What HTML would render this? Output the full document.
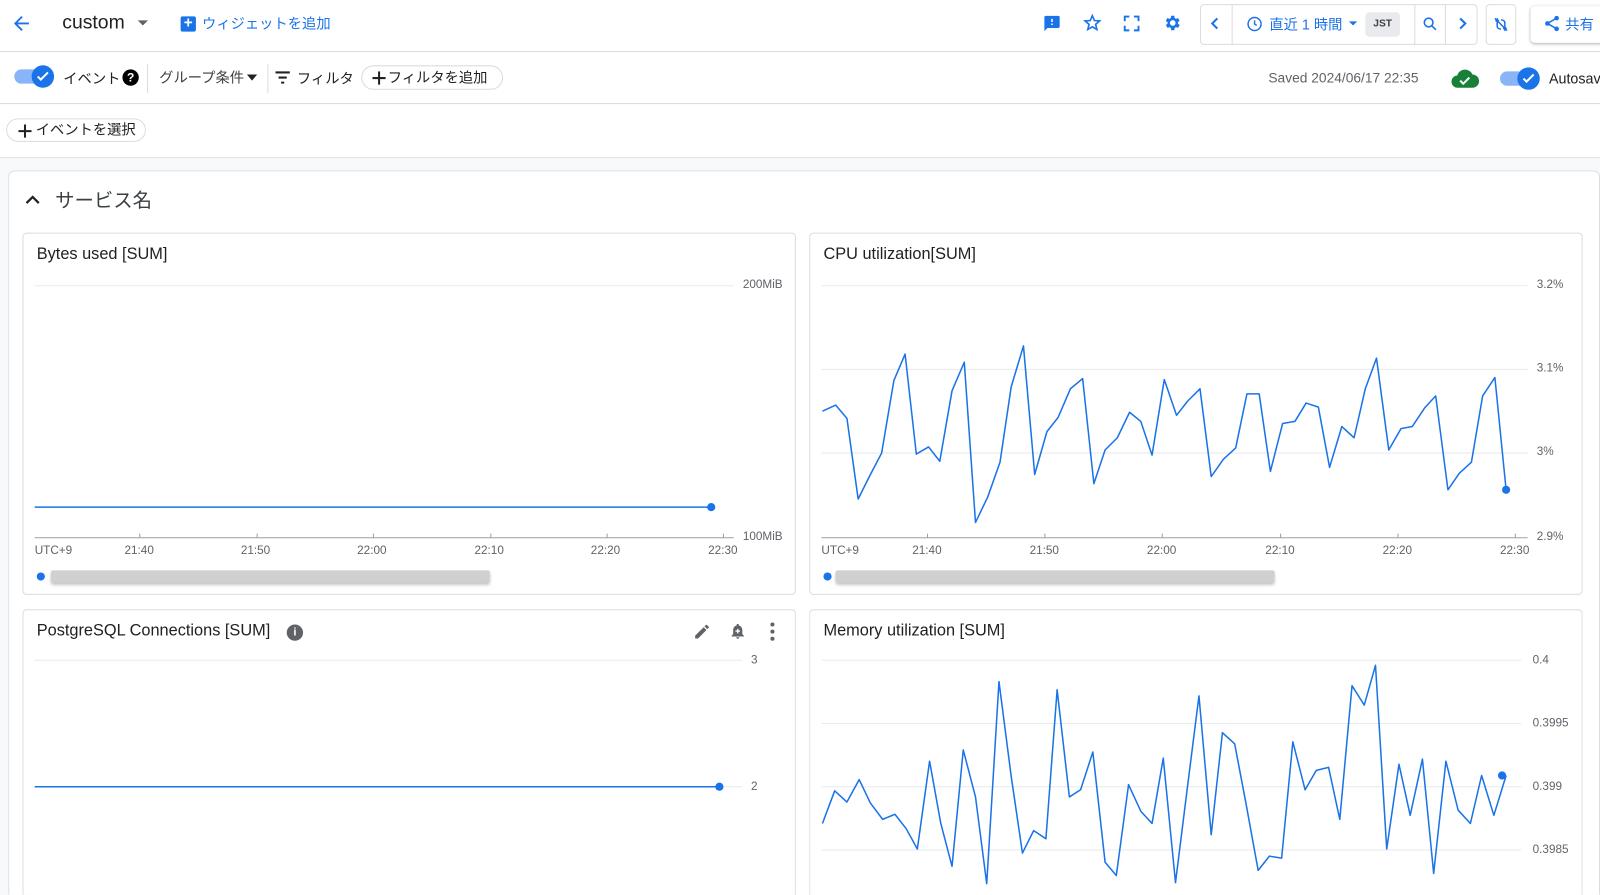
<!DOCTYPE html>
<html><head><meta charset="utf-8"><style>
*{box-sizing:border-box;margin:0;padding:0}
html,body{width:1600px;height:895px;overflow:hidden;background:#fff}
body{font-family:"Liberation Sans","Noto Sans CJK JP",sans-serif;color:#202124}
#w{position:absolute;left:0;top:0;width:1568px;height:877px;transform:scale(1.0204);transform-origin:0 0;overflow:hidden}
.a{position:absolute}
.blue{color:#1a73e8}
.hl{position:absolute;left:0;right:0;height:1px;background:#dadce0}
.chip{position:absolute;border:1px solid #dadce0;border-radius:14px;height:24px;font-size:14px;line-height:22px;padding:0 0 0 25px;white-space:nowrap}
.plus{position:absolute;left:10px;top:5px}
.card{position:absolute;background:#fff;border:1px solid #dadce0;border-radius:4px}
.t{font-size:16px;position:absolute;left:13px;top:12px}
.ax{font-size:11.5px;color:#5f6368;position:absolute}
.blur{position:absolute;height:12px;background:#d0d0d0;border-radius:2px;box-shadow:0 2px 3px rgba(0,0,0,.25)}
</style></head><body><div id="w">
<svg class="a" style="left:10px;top:12px" width="22" height="22" viewBox="0 0 24 24"><path d="M20 11H7.8l5.6-5.6L12 4l-8 8 8 8 1.4-1.4L7.8 13H20z" fill="#1a73e8"/></svg>
<div class="a" style="left:61px;top:12px;font-size:19px">custom</div>
<div class="a" style="left:135px;top:20px;border:5px solid transparent;border-top-color:#5f6368"></div>
<div class="a" style="left:177px;top:16px;width:15px;height:15px;background:#1a73e8;border-radius:2px;color:#fff;font-size:15px;line-height:14px;text-align:center;font-weight:bold">+</div>
<div class="a blue" style="left:198px;top:13px;font-size:14px">ウィジェットを追加</div>
<svg class="a" style="left:1022px;top:14px" width="18" height="18" viewBox="0 0 24 24"><path d="M20 2H4a2 2 0 0 0-2 2v18l4-4h14a2 2 0 0 0 2-2V4a2 2 0 0 0-2-2zm-7 12h-2v-2h2zm0-4h-2V6h2z" fill="#1a73e8"/></svg>
<svg class="a" style="left:1061px;top:13px" width="19" height="19" viewBox="0 0 24 24"><path d="M12 3l2.6 6 6.4.5-4.9 4.2 1.5 6.3L12 16.7 6.4 20l1.5-6.3L3 9.5 9.4 9z" fill="none" stroke="#1a73e8" stroke-width="2"/></svg>
<svg class="a" style="left:1100px;top:14px" width="18" height="18" viewBox="0 0 24 24"><path d="M3 9V3h6M15 3h6v6M21 15v6h-6M9 21H3v-6" fill="none" stroke="#1a73e8" stroke-width="2.5"/></svg>
<svg class="a" style="left:1139px;top:13px" width="19" height="19" viewBox="0 0 24 24"><path d="M19.4 13a7.5 7.5 0 0 0 0-2l2.1-1.6-2-3.5-2.5 1a7 7 0 0 0-1.7-1L15 3h-4l-.4 2.9a7 7 0 0 0-1.7 1l-2.5-1-2 3.5L6.6 11a7.5 7.5 0 0 0 0 2l-2.1 1.6 2 3.5 2.5-1a7 7 0 0 0 1.7 1L11 21h4l.4-2.9a7 7 0 0 0 1.7-1l2.5 1 2-3.5zM13 15.5a3.5 3.5 0 1 1 0-7 3.5 3.5 0 0 1 0 7z" fill="#1a73e8"/></svg>
<div class="a" style="left:1176px;top:4px;width:272px;height:40px;border:1px solid #dadce0;border-radius:4px"></div>
<div class="a" style="left:1207px;top:4px;width:1px;height:40px;background:#dadce0"></div>
<div class="a" style="left:1386px;top:4px;width:1px;height:40px;background:#dadce0"></div>
<div class="a" style="left:1416px;top:4px;width:1px;height:40px;background:#dadce0"></div>
<svg class="a" style="left:1184px;top:15px" width="14" height="16" viewBox="0 0 14 16"><path d="M9 3L4 8l5 5" fill="none" stroke="#1a73e8" stroke-width="2"/></svg>
<svg class="a" style="left:1221px;top:15px" width="17" height="17" viewBox="0 0 24 24"><circle cx="12" cy="12" r="9" fill="none" stroke="#1a73e8" stroke-width="2"/><path d="M12 7v5l3 2" fill="none" stroke="#1a73e8" stroke-width="2"/></svg>
<div class="a blue" style="left:1244px;top:14px;font-size:14px">直近 1 時間</div>
<div class="a" style="left:1322px;top:21px;border:4.5px solid transparent;border-top-color:#1a73e8"></div>
<div class="a" style="left:1338px;top:12px;width:34px;height:24px;background:#e8eaed;border-radius:4px;font-size:10px;font-weight:bold;line-height:24px;text-align:center;color:#3c4043">JST</div>
<svg class="a" style="left:1393px;top:15px" width="17" height="17" viewBox="0 0 24 24"><circle cx="10" cy="10" r="6" fill="none" stroke="#1a73e8" stroke-width="2.2"/><path d="M14.5 14.5L20 20" stroke="#1a73e8" stroke-width="2.2"/></svg>
<svg class="a" style="left:1426px;top:15px" width="14" height="16" viewBox="0 0 14 16"><path d="M5 3l5 5-5 5" fill="none" stroke="#1a73e8" stroke-width="2"/></svg>
<div class="a" style="left:1456px;top:4px;width:30px;height:40px;border:1px solid #dadce0;border-radius:4px"></div>
<svg class="a" style="left:1462px;top:15px" width="18" height="18" viewBox="0 0 24 24"><path d="M4 4l16 16M7 4v10M17 20V10M9 8l-2-3-2 3M15 16l2 3 2-3M7 14c0 3 3 4 5 4M17 10c0-3-3-4-5-4" fill="none" stroke="#1a73e8" stroke-width="2"/></svg>
<div class="a" style="left:1500px;top:6px;width:80px;height:36px;background:#fff;border-radius:4px;box-shadow:0 1px 3px rgba(0,0,0,.3)"></div>
<svg class="a" style="left:1512px;top:14px" width="18" height="18" viewBox="0 0 24 24"><circle cx="18" cy="5" r="3" fill="#1a73e8"/><circle cx="6" cy="12" r="3" fill="#1a73e8"/><circle cx="18" cy="19" r="3" fill="#1a73e8"/><path d="M6 12l12-7M6 12l12 7" stroke="#1a73e8" stroke-width="2"/></svg>
<div class="a blue" style="left:1534px;top:14px;font-size:14px">共有</div>
<div class="hl" style="top:50px"></div>
<div class="a" style="left:14px;top:68px;width:36px;height:14px;background:#8ab4f8;border-radius:7px"></div>
<div class="a" style="left:31px;top:64px;width:22px;height:22px;background:#1a73e8;border-radius:50%"></div>
<svg class="a" style="left:35px;top:68px" width="14" height="14" viewBox="0 0 14 14"><path d="M2 7l3 3 7-7" fill="none" stroke="#fff" stroke-width="2"/></svg>
<div class="a" style="left:62px;top:67px;font-size:14px">イベント</div>
<div class="a" style="left:120px;top:68px;width:16px;height:16px;background:#000;border-radius:50%;color:#fff;font-size:12px;font-weight:bold;text-align:center;line-height:16px">?</div>
<div class="a" style="left:144px;top:63px;width:1px;height:28px;background:#dadce0"></div>
<div class="a" style="left:156px;top:66px;font-size:14px;color:#3c4043">グループ条件</div>
<div class="a" style="left:242px;top:73px;border:5px solid transparent;border-top:6px solid #202124"></div>
<div class="a" style="left:262px;top:63px;width:1px;height:28px;background:#dadce0"></div>
<svg class="a" style="left:268px;top:68px" width="18" height="16" viewBox="0 0 18 16"><path d="M2 3h14M5 8h8M7.5 13h3" stroke="#202124" stroke-width="2"/></svg>
<div class="a" style="left:291px;top:67px;font-size:14px">フィルタ</div>
<div class="chip" style="left:354px;top:64px;width:139px"><svg class="plus" width="13" height="13" viewBox="0 0 13 13"><path d="M6.5 0v13M0 6.5h13" stroke="#202124" stroke-width="2"/></svg>フィルタを追加</div>
<div class="a" style="left:1243px;top:69px;font-size:13.5px;color:#5f6368">Saved 2024/06/17 22:35</div>
<svg class="a" style="left:1422px;top:67px" width="28" height="20" viewBox="0 0 28 20"><path d="M7 19a6 6 0 0 1-1-12A8 8 0 0 1 21 6a6 6 0 0 1 0 13z" fill="#188038"/><path d="M9 12l3 3 6-6" fill="none" stroke="#fff" stroke-width="2"/></svg>
<div class="a" style="left:1470px;top:70px;width:36px;height:14px;background:#8ab4f8;border-radius:7px"></div>
<div class="a" style="left:1487px;top:66px;width:22px;height:22px;background:#1a73e8;border-radius:50%"></div>
<svg class="a" style="left:1491px;top:70px" width="14" height="14" viewBox="0 0 14 14"><path d="M2 7l3 3 7-7" fill="none" stroke="#fff" stroke-width="2"/></svg>
<div class="a" style="left:1518px;top:69px;font-size:14px">Autosave</div>
<div class="hl" style="top:101px"></div>
<div class="chip" style="left:6px;top:116px;width:137px;height:23px;line-height:21px;padding-left:28px"><svg class="plus" style="left:11px" width="13" height="13" viewBox="0 0 13 13"><path d="M6.5 0v13M0 6.5h13" stroke="#202124" stroke-width="2"/></svg>イベントを選択</div>
<div class="hl" style="top:154px"></div>
<div class="a" style="left:0;top:155px;width:1568px;height:722px;background:#f8f9fa"></div>
<div class="card" style="left:8px;top:167px;width:1560px;height:710px;border-radius:6px 6px 0 0;border-bottom:none"></div>
<svg class="a" style="left:23px;top:187px" width="18" height="18" viewBox="0 0 18 18"><path d="M3 12l6-6 6 6" fill="none" stroke="#202124" stroke-width="2.2"/></svg>
<div class="a" style="left:54px;top:182px;font-size:19px;color:#3c4043">サービス名</div>

<div class="card" style="left:22px;top:228px;width:758px;height:355px">
<div class="t">Bytes used [SUM]</div>
<svg class="a" style="left:0;top:0" width="758" height="355">
<line x1="11" y1="51" x2="696" y2="51" stroke="#e8eaed"/>
<line x1="11" y1="298" x2="696" y2="298" stroke="#9aa0a6"/>
<g stroke="#9aa0a6"><line x1="114" y1="294" x2="114" y2="298"/><line x1="229" y1="294" x2="229" y2="298"/><line x1="343" y1="294" x2="343" y2="298"/><line x1="458" y1="294" x2="458" y2="298"/><line x1="572" y1="294" x2="572" y2="298"/><line x1="686" y1="294" x2="686" y2="298"/></g>
<line x1="11" y1="268" x2="674" y2="268" stroke="#1a73e8" stroke-width="1.5"/><circle cx="674" cy="268" r="4" fill="#1a73e8"/>
<circle cx="17" cy="336" r="4" fill="#1a73e8"/>
</svg>
<div class="ax" style="left:705px;top:44px">200MiB</div><div class="ax" style="left:705px;top:291px">100MiB</div>
<div class="ax" style="left:11px;top:305px">UTC+9</div><div class="ax" style="left:99px;top:305px">21:40</div><div class="ax" style="left:213px;top:305px">21:50</div><div class="ax" style="left:327px;top:305px">22:00</div><div class="ax" style="left:442px;top:305px">22:10</div><div class="ax" style="left:556px;top:305px">22:20</div><div class="ax" style="left:671px;top:305px">22:30</div>
<div class="blur" style="left:27px;top:330px;width:430px"></div>
</div>

<div class="card" style="left:793px;top:228px;width:758px;height:355px">
<div class="t">CPU utilization[SUM]</div>
<svg class="a" style="left:0;top:0" width="758" height="355">
<line x1="11" y1="51" x2="703" y2="51" stroke="#e8eaed"/><line x1="11" y1="133" x2="703" y2="133" stroke="#e8eaed"/><line x1="11" y1="215" x2="703" y2="215" stroke="#e8eaed"/>
<line x1="11" y1="298" x2="703" y2="298" stroke="#9aa0a6"/>
<g stroke="#9aa0a6"><line x1="115" y1="294" x2="115" y2="298"/><line x1="230" y1="294" x2="230" y2="298"/><line x1="345" y1="294" x2="345" y2="298"/><line x1="461" y1="294" x2="461" y2="298"/><line x1="576" y1="294" x2="576" y2="298"/><line x1="691" y1="294" x2="691" y2="298"/></g>
<polyline transform="translate(-793,-228)" fill="none" stroke="#1a73e8" stroke-width="1.5" stroke-linejoin="round" points="805,402 818,396 829,409 840,488 851,466 863,443 875,372 886,346 897,444 909,437 920,451 932,382 944,354 955,511 967,486 979,452 990,378 1002,338 1013,464 1025,422 1036,408 1048,380 1060,370 1071,473 1082,440 1094,428 1106,403 1117,412 1128,445 1140,371 1152,406 1163,392 1175,380 1186,466 1198,449 1210,438 1221,385 1233,385 1244,461 1256,414 1268,412 1279,394 1291,398 1302,457 1314,417 1326,428 1337,380 1348,350 1360,440 1372,419 1383,417 1395,399 1406,387 1418,479 1429,463 1441,452 1452,387 1464,369 1475,479"/>
<circle cx="682" cy="251" r="4" fill="#1a73e8"/>
<circle cx="17" cy="336" r="4" fill="#1a73e8"/>
</svg>
<div class="ax" style="left:712px;top:44px">3.2%</div><div class="ax" style="left:712px;top:126px">3.1%</div><div class="ax" style="left:712px;top:208px">3%</div><div class="ax" style="left:712px;top:291px">2.9%</div>
<div class="ax" style="left:11px;top:305px">UTC+9</div><div class="ax" style="left:100px;top:305px">21:40</div><div class="ax" style="left:215px;top:305px">21:50</div><div class="ax" style="left:330px;top:305px">22:00</div><div class="ax" style="left:446px;top:305px">22:10</div><div class="ax" style="left:561px;top:305px">22:20</div><div class="ax" style="left:676px;top:305px">22:30</div>
<div class="blur" style="left:25px;top:330px;width:430px"></div>
</div>

<div class="card" style="left:22px;top:597px;width:758px;height:280px;border-bottom:none;border-radius:4px 4px 0 0">
<div class="t" style="top:12px">PostgreSQL Connections [SUM]</div>
<div class="a" style="left:258px;top:14px;width:16px;height:16px;background:#5f6368;border-radius:50%;color:#fff;font-size:11px;font-weight:bold;text-align:center;line-height:16px">i</div>
<svg class="a" style="left:656px;top:12px" width="18" height="18" viewBox="0 0 24 24"><path d="M3 17.2V21h3.8L17.8 9.9l-3.7-3.7zM20.7 7a1 1 0 0 0 0-1.4l-2.3-2.3a1 1 0 0 0-1.4 0l-1.8 1.8 3.7 3.7z" fill="#5f6368"/></svg>
<svg class="a" style="left:691px;top:11px" width="18" height="19" viewBox="0 0 24 24"><path d="M12 22a2 2 0 0 0 2-2h-4a2 2 0 0 0 2 2zm6-6v-5c0-3-1.6-5.6-4.5-6.3V4a1.5 1.5 0 0 0-3 0v.7C7.6 5.4 6 8 6 11v5l-2 2v1h16v-1z" fill="#5f6368"/><path d="M12 9v6M9 12h6" stroke="#fff" stroke-width="1.8"/></svg>
<svg class="a" style="left:726px;top:11px" width="16" height="20" viewBox="0 0 16 20"><circle cx="8" cy="3" r="2" fill="#5f6368"/><circle cx="8" cy="10" r="2" fill="#5f6368"/><circle cx="8" cy="17" r="2" fill="#5f6368"/></svg>
<svg class="a" style="left:0;top:0" width="758" height="280">
<line x1="11" y1="49" x2="704" y2="49" stroke="#e8eaed"/><line x1="11" y1="173" x2="704" y2="173" stroke="#e8eaed"/>
<line x1="11" y1="173" x2="682" y2="173" stroke="#1a73e8" stroke-width="1.5"/><circle cx="682" cy="173" r="4" fill="#1a73e8"/>
</svg>
<div class="ax" style="left:713px;top:43px">3</div><div class="ax" style="left:713px;top:167px">2</div>
</div>

<div class="card" style="left:793px;top:597px;width:758px;height:280px;border-bottom:none;border-radius:4px 4px 0 0">
<div class="t">Memory utilization [SUM]</div>
<svg class="a" style="left:0;top:0" width="758" height="280">
<line x1="11" y1="49" x2="697" y2="49" stroke="#e8eaed"/><line x1="11" y1="111" x2="697" y2="111" stroke="#e8eaed"/><line x1="11" y1="173" x2="697" y2="173" stroke="#e8eaed"/><line x1="11" y1="235" x2="697" y2="235" stroke="#e8eaed"/>
<polyline transform="translate(-793,-597)" fill="none" stroke="#1a73e8" stroke-width="1.5" stroke-linejoin="round" points="805,806 817,774 829,785 841,763 852,786 864,802 876,797 887,811 898,831 910,745 921,806 932,848 943,734 955,780 966,865 978,667 990,760 1001,835 1012,813 1024,821 1035,675 1047,780 1058,773 1070,736 1082,844 1093,857 1105,768 1117,794 1128,806 1139,742 1151,864 1163,768 1174,681 1186,817 1197,717 1209,728 1220,786 1232,852 1243,838 1255,840 1266,726 1278,773 1289,754 1301,751 1312,802 1324,671 1336,690 1347,651 1358,831 1370,748 1381,798 1393,743 1404,855 1416,745 1428,793 1440,806 1451,759 1463,798 1475,759"/>
<circle cx="678" cy="162" r="4" fill="#1a73e8"/>
</svg>
<div class="ax" style="left:708px;top:43px">0.4</div><div class="ax" style="left:708px;top:105px">0.3995</div><div class="ax" style="left:708px;top:167px">0.399</div><div class="ax" style="left:708px;top:229px">0.3985</div>
</div>
</div></body></html>
